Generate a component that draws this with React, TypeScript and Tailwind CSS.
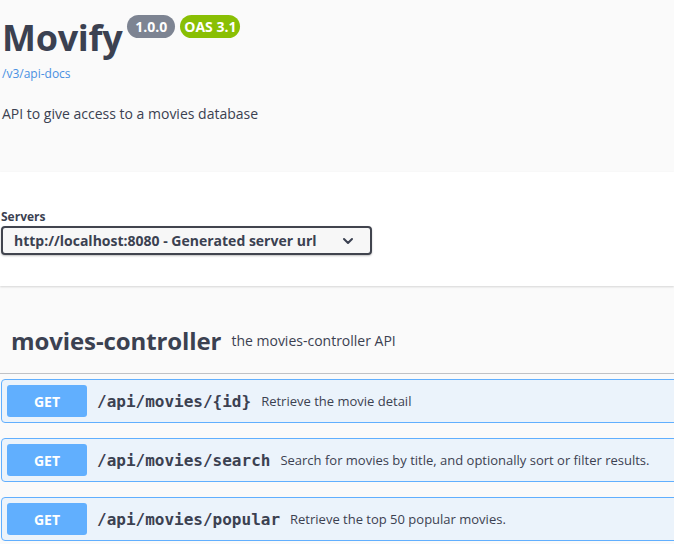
import React from "react";

const ops = [
  { path: "/api/movies/{id}", desc: "Retrieve the movie detail" },
  { path: "/api/movies/search", desc: "Search for movies by title, and optionally sort or filter results." },
  { path: "/api/movies/popular", desc: "Retrieve the top 50 popular movies." },
];

function OpRow({ path, desc }: { path: string; desc: string }) {
  return (
    <div className="mb-[15px] flex h-[44px] w-[700px] items-center rounded-[4px] border border-[#61affe] bg-[#ebf3fb] px-[5px]">
      <span className="flex h-[32px] w-[80px] items-center justify-center rounded-[3px] bg-[#61affe] text-[14px] font-bold text-white">
        GET
      </span>
      <span className="px-[10px] pt-[1px] font-['DejaVu_Sans_Mono',monospace] text-[16px] font-bold text-[#3b4151]">{path}</span>
      <span className="pt-[2px] text-[13px] text-[#3b4151]">{desc}</span>
    </div>
  );
}

export default function App() {
  return (
    <div className="h-[544px] w-[674px] overflow-hidden bg-[#fafafa] font-['Open_Sans',sans-serif] text-[#3b4151]">
      {/* info */}
      <div className="h-[172px] pl-[2px] pt-[16px]">
        <div className="flex items-start">
          <h1 className="text-[36px] font-bold leading-[1.2] tracking-[-0.3px]">Movify</h1>
          <span className="ml-[5px] mt-[-1px] flex h-[23px] w-[48px] items-center justify-center rounded-full bg-[#7d8492] text-[14px] font-bold text-white">
            1.0.0
          </span>
          <span className="ml-[5px] mt-[-1px] flex h-[23px] w-[60px] items-center justify-center rounded-full bg-[#89bf04] text-[14px] font-bold text-white">
            OAS 3.1
          </span>
        </div>
        <a className="mt-[6px] block text-[12px] text-[#4990e2]">/v3/api-docs</a>
        <p className="mt-[20px] text-[14px]">API to give access to a movies database</p>
      </div>

      {/* servers */}
      <div className="h-[114px] bg-white pl-[1px] pt-[36px] shadow-[0_1px_2px_0_rgba(0,0,0,0.15)]">
        <div className="text-[12px] font-bold leading-[18px]">Servers</div>
        <div className="flex h-[29px] w-[371px] items-center justify-between rounded-[4px] border-2 border-[#41444e] bg-[#f7f7f7] pl-[11px] pr-[16px] shadow-[0_1px_2px_0_rgba(0,0,0,0.25)]">
          <span className="text-[14px] font-bold">http://localhost:8080 - Generated server url</span>
          <svg width="12" height="8" viewBox="0 0 12 8" fill="none">
            <polyline points="2,2 6,6 10,2" stroke="#3b4151" strokeWidth="2" strokeLinecap="round" strokeLinejoin="round" />
          </svg>
        </div>
      </div>

      {/* tag */}
      <div className="mt-[22px] flex h-[66px] items-center gap-[10px] border-b border-[rgba(59,65,81,0.3)] pl-[11px]">
        <h3 className="text-[24px] font-bold tracking-[-0.1px]">movies-controller</h3>
        <small className="text-[14px]">the movies-controller API</small>
      </div>

      <div className="ml-[1px] mt-[5px]">
        {ops.map((o) => (
          <OpRow key={o.path} path={o.path} desc={o.desc} />
        ))}
      </div>
    </div>
  );
}
